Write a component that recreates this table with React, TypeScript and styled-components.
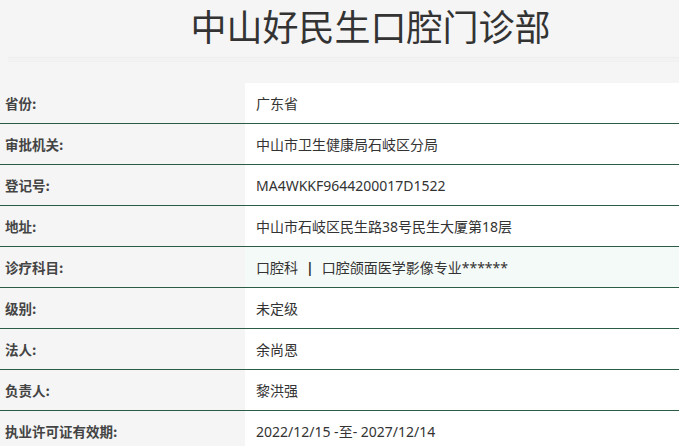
import React from "react";
import styled, { createGlobalStyle } from "styled-components";

const Global = createGlobalStyle`
  html, body { margin: 0; padding: 0; background: #f5f5f5; }
  body { font-family: "Noto Sans", "Noto Sans CJK SC", sans-serif; color: #333; }
`;

const Page = styled.div`
  width: 679px;
  overflow: hidden;
`;

const Header = styled.header`
  height: 57px;
  padding-left: 62px;
  display: flex;
  align-items: flex-start;
  justify-content: center;
`;

const Title = styled.h1`
  margin: 0;
  margin-top: 3px;
  font-family: "Noto Sans CJK SC", sans-serif;
  font-size: 36px;
  font-weight: 400;
  line-height: 44px;
  color: #333;
`;

const Rule = styled.hr`
  margin: 0 0 0 8px;
  height: 3px;
  border: 0;
  border-top: 1px solid #ededed;
  border-bottom: 1px solid #f1f1f1;
  background: #f2f2f2;
`;

const Table = styled.div`
  margin-top: 21px;
  display: flex;
  flex-direction: column;
`;

const Row = styled.div`
  display: grid;
  grid-template-columns: 245px 1fr;
  height: 40px;
  border-bottom: 1px solid #2b5c46;
`;

const Label = styled.div`
  display: flex;
  align-items: center;
  padding-left: 5px;
  font-family: "Noto Sans CJK SC", sans-serif;
  font-size: 13.5px;
  font-weight: 700;
  color: #444;
`;

const Value = styled.div<{ $hl?: boolean }>`
  display: flex;
  align-items: center;
  padding-left: 11px;
  font-size: 14px;
  color: #333;
  background: ${(p) => (p.$hl ? "#f4faf7" : "#ffffff")};
`;

const Sep = styled.span`
  margin: 0 8px;
  font-weight: 700;
`;

const rows: [string, React.ReactNode, boolean?][] = [
  ["省份:", "广东省"],
  ["审批机关:", "中山市卫生健康局石岐区分局"],
  ["登记号:", "MA4WKKF9644200017D1522"],
  ["地址:", "中山市石岐区民生路38号民生大厦第18层"],
  [
    "诊疗科目:",
    <>
      口腔科<Sep>|</Sep>口腔颌面医学影像专业******
    </>,
    true,
  ],
  ["级别:", "未定级"],
  ["法人:", "余尚恩"],
  ["负责人:", "黎洪强"],
  ["执业许可证有效期:", "2022/12/15 -至- 2027/12/14"],
];

export default function App() {
  return (
    <Page>
      <Global />
      <Header>
        <Title>中山好民生口腔门诊部</Title>
      </Header>
      <Rule />
      <Table>
        {rows.map(([l, v, hl], i) => (
          <Row key={i}>
            <Label>{l}</Label>
            <Value $hl={hl}>{v}</Value>
          </Row>
        ))}
      </Table>
    </Page>
  );
}
